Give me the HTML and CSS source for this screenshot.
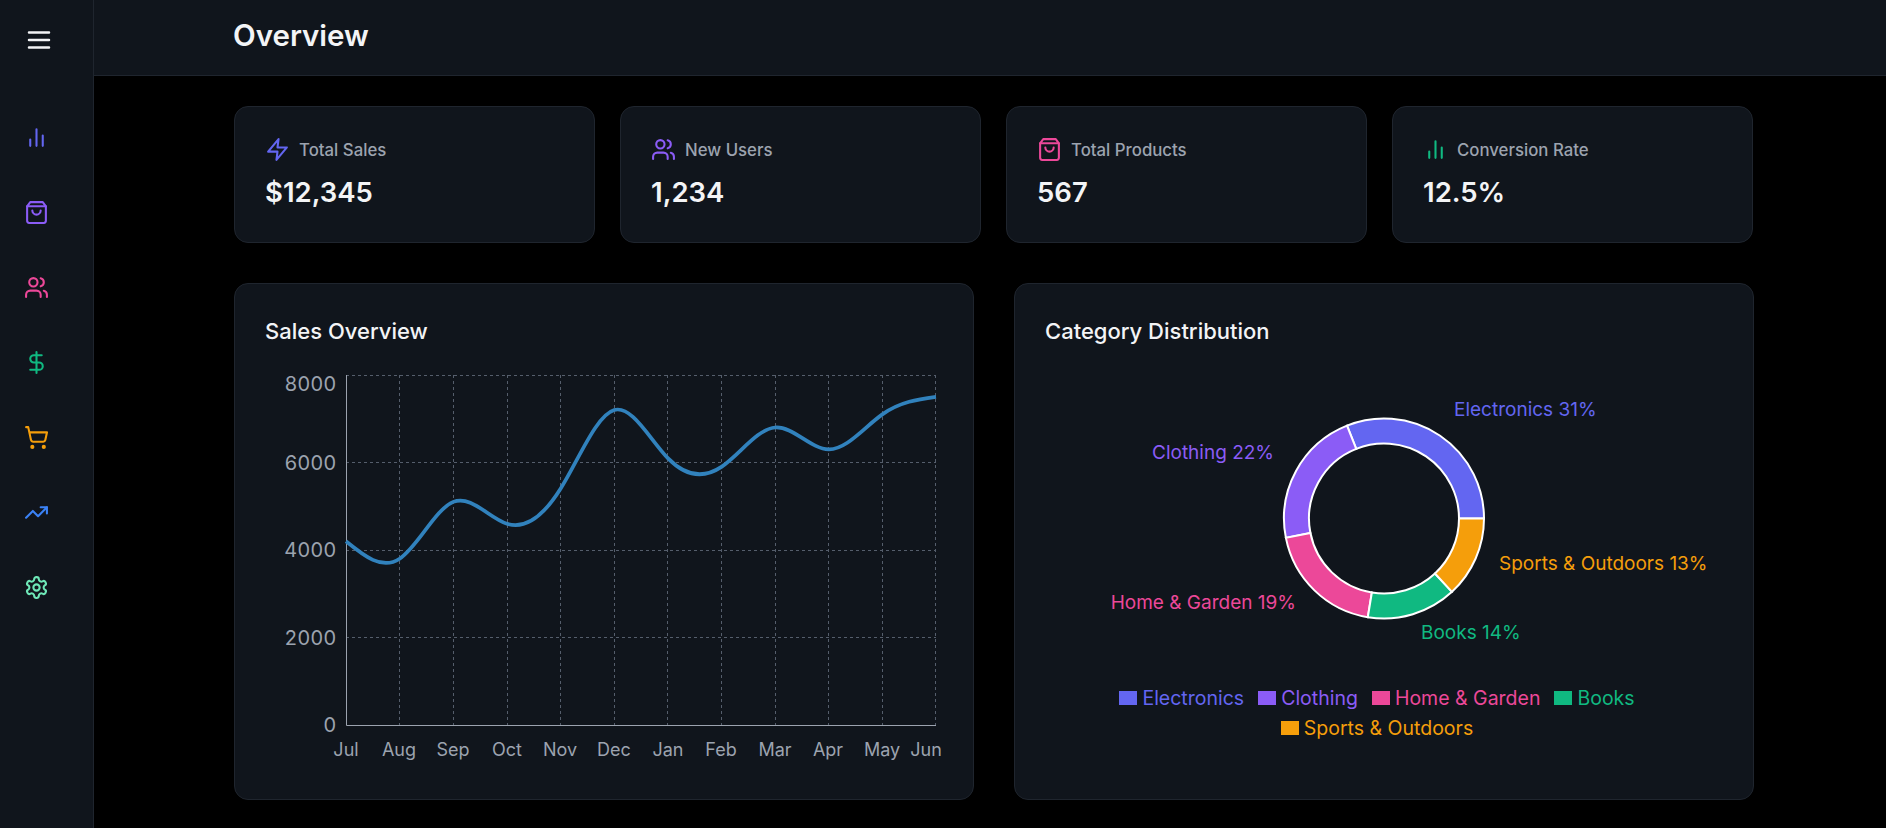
FILE: index.html
```html
<!DOCTYPE html>
<html lang="en">
<head>
    <meta charset="UTF-8">
    <meta name="viewport" content="width=device-width, initial-scale=1.0">
    <title>Overview</title>
    <link rel="stylesheet" href="styles.css">
</head>
<body>

    <aside class="sidebar">
        <button class="menu-btn">
            <svg class="icon icon-menu" viewBox="0 0 24 24"><path d="M4 6h16M4 12h16M4 18h16"/></svg>
        </button>
        <nav class="side-nav">
            <a href="#" class="c-indigo"><svg class="icon" viewBox="0 0 24 24"><path d="M18 20V10M12 20V4M6 20v-6"/></svg></a>
            <a href="#" class="c-violet"><svg class="icon" viewBox="0 0 24 24"><path d="M6 2 3 6v14a2 2 0 0 0 2 2h14a2 2 0 0 0 2-2V6l-3-4Z"/><path d="M3 6h18"/><path d="M16 10a4 4 0 0 1-8 0"/></svg></a>
            <a href="#" class="c-pink"><svg class="icon" viewBox="0 0 24 24"><path d="M16 21v-2a4 4 0 0 0-4-4H6a4 4 0 0 0-4 4v2"/><circle cx="9" cy="7" r="4"/><path d="M22 21v-2a4 4 0 0 0-3-3.87"/><path d="M16 3.13a4 4 0 0 1 0 7.75"/></svg></a>
            <a href="#" class="c-green"><svg class="icon" viewBox="0 0 24 24"><path d="M12 2v20"/><path d="M17 5H9.5a3.5 3.5 0 0 0 0 7h5a3.5 3.5 0 0 1 0 7H6"/></svg></a>
            <a href="#" class="c-amber"><svg class="icon" viewBox="0 0 24 24"><circle cx="8" cy="21" r="1"/><circle cx="19" cy="21" r="1"/><path d="M2.05 2.05h2l2.66 12.42a2 2 0 0 0 2 1.58h9.78a2 2 0 0 0 1.95-1.57l1.65-7.43H5.12"/></svg></a>
            <a href="#" class="c-blue"><svg class="icon" viewBox="0 0 24 24"><path d="M22 7l-8.500 8.500-5-5L2 17"/><path d="M16 7h6v6"/></svg></a>
            <a href="#" class="c-mint"><svg class="icon" viewBox="0 0 24 24"><path d="M12.220 2h-.44a2 2 0 0 0-2 2v.18a2 2 0 0 1-1 1.730l-.43.25a2 2 0 0 1-2 0l-.15-.08a2 2 0 0 0-2.730.73l-.22.38a2 2 0 0 0 .73 2.730l.15.1a2 2 0 0 1 1 1.720v.51a2 2 0 0 1-1 1.740l-.15.09a2 2 0 0 0-.73 2.730l.22.38a2 2 0 0 0 2.730.73l.15-.08a2 2 0 0 1 2 0l.43.25a2 2 0 0 1 1 1.730V20a2 2 0 0 0 2 2h.44a2 2 0 0 0 2-2v-.18a2 2 0 0 1 1-1.730l.43-.25a2 2 0 0 1 2 0l.15.08a2 2 0 0 0 2.730-.73l.22-.39a2 2 0 0 0-.73-2.730l-.15-.08a2 2 0 0 1-1-1.740v-.5a2 2 0 0 1 1-1.740l.15-.09a2 2 0 0 0 .73-2.730l-.22-.38a2 2 0 0 0-2.730-.73l-.15.08a2 2 0 0 1-2 0l-.43-.25a2 2 0 0 1-1-1.730V4a2 2 0 0 0-2-2z"/><circle cx="12" cy="12" r="3"/></svg></a>
        </nav>
    </aside>

    <div class="page">
        <header class="topbar">
            <h1>Overview</h1>
        </header>

        <main class="content">
            <section class="stats">
                <div class="card stat-card">
                    <div class="stat-label">
                        <svg class="icon c-indigo" viewBox="0 0 24 24"><path d="M13 2 3 14h9l-1 8 10-12h-9l1-8z"/></svg>
                        <span>Total Sales</span>
                    </div>
                    <p class="stat-value">$12,345</p>
                </div>
                <div class="card stat-card">
                    <div class="stat-label">
                        <svg class="icon c-violet" viewBox="0 0 24 24"><path d="M16 21v-2a4 4 0 0 0-4-4H6a4 4 0 0 0-4 4v2"/><circle cx="9" cy="7" r="4"/><path d="M22 21v-2a4 4 0 0 0-3-3.870"/><path d="M16 3.130a4 4 0 0 1 0 7.750"/></svg>
                        <span>New Users</span>
                    </div>
                    <p class="stat-value">1,234</p>
                </div>
                <div class="card stat-card">
                    <div class="stat-label">
                        <svg class="icon c-pink" viewBox="0 0 24 24"><path d="M6 2 3 6v14a2 2 0 0 0 2 2h14a2 2 0 0 0 2-2V6l-3-4Z"/><path d="M3 6h18"/><path d="M16 10a4 4 0 0 1-8 0"/></svg>
                        <span>Total Products</span>
                    </div>
                    <p class="stat-value">567</p>
                </div>
                <div class="card stat-card">
                    <div class="stat-label">
                        <svg class="icon c-green" viewBox="0 0 24 24"><path d="M18 20V10M12 20V4M6 20v-6"/></svg>
                        <span>Conversion Rate</span>
                    </div>
                    <p class="stat-value">12.5%</p>
                </div>
            </section>

            <section class="charts">
                <div class="card chart-card">
                    <h2>Sales Overview</h2>
                    <svg class="chart" width="678" height="410" viewBox="0 0 678 410">
                        <g class="grid">
                            <path d="M81 15.500h590M81 102.500h590M81 190.500h590M81 277.500h590"/>
                            <path d="M134.500 15v350M188.500 15v350M242.500 15v350M295.500 15v350M349.500 15v350M402.500 15v350M456.500 15v350M510.500 15v350M563.500 15v350M617.500 15v350M670.500 15v350"/>
                        </g>
                        <path class="axis" d="M81.500 15v350.500H671"/>
                        <g class="tick tick-y" text-anchor="end">
                            <text x="71.500" y="31">8000</text>
                            <text x="71.500" y="110">6000</text>
                            <text x="71.500" y="197">4000</text>
                            <text x="71.500" y="285">2000</text>
                            <text x="71.500" y="372">0</text>
                        </g>
                        <g class="tick" text-anchor="middle">
                            <text x="81" y="396">Jul</text>
                            <text x="134" y="396">Aug</text>
                            <text x="188" y="396">Sep</text>
                            <text x="242" y="396">Oct</text>
                            <text x="295" y="396">Nov</text>
                            <text x="349" y="396">Dec</text>
                            <text x="403" y="396">Jan</text>
                            <text x="456" y="396">Feb</text>
                            <text x="510" y="396">Mar</text>
                            <text x="563" y="396">Apr</text>
                            <text x="617" y="396">May</text>
                            <text x="661" y="396">Jun</text>
                        </g>
                        <path id="salesLine" class="sales-line"/>
                    </svg>
                </div>

                <div class="card chart-card">
                    <h2>Category Distribution</h2>
                    <svg class="chart chart-pie" width="678" height="300" viewBox="0 0 678 300">
                        <g id="pieSlices" class="pie-slices"></g>
                        <text class="pie-label f-indigo" x="409" y="56">Electronics 31%</text>
                        <text class="pie-label f-violet" x="229" y="99" text-anchor="end">Clothing 22%</text>
                        <text class="pie-label f-amber" x="454" y="210">Sports &amp; Outdoors 13%</text>
                        <text class="pie-label f-pink" x="251" y="249" text-anchor="end">Home &amp; Garden 19%</text>
                        <text class="pie-label f-green" x="376" y="279">Books 14%</text>
                    </svg>
                    <ul class="legend">
                        <li class="c-indigo"><span class="swatch"></span>Electronics</li>
                        <li class="c-violet"><span class="swatch"></span>Clothing</li>
                        <li class="c-pink"><span class="swatch"></span>Home &amp; Garden</li>
                        <li class="c-green"><span class="swatch"></span>Books</li>
                        <li class="c-amber"><span class="swatch"></span>Sports &amp; Outdoors</li>
                    </ul>
                </div>
            </section>
        </main>
    </div>

    <script src="script.js"></script>
</body>
</html>
```

FILE: styles.css
```css
* {
    box-sizing: border-box;
}

body {
    font-family: Inter, "Liberation Sans", sans-serif;
    background-color: #000;
    color: #f3f4f6;
    margin: 0;
    display: flex;
    height: 828px;
    overflow: hidden;
}

h1, h2, p, ul {
    margin: 0;
    padding: 0;
}

.icon {
    display: block;
    width: 25px;
    height: 25px;
    flex: none;
    fill: none;
    stroke: currentColor;
    stroke-width: 2;
    stroke-linecap: round;
    stroke-linejoin: round;
}

.icon-menu {
    width: 30px;
    height: 30px;
}

.c-indigo { color: #6366f1; }
.c-violet { color: #8b5cf6; }
.c-pink { color: #ec4899; }
.c-green { color: #10b981; }
.c-amber { color: #f59e0b; }
.c-blue { color: #3b82f6; }
.c-mint { color: #6ee7b7; }

.f-indigo { fill: #6366f1; }
.f-violet { fill: #8b5cf6; }
.f-pink { fill: #ec4899; }
.f-green { fill: #10b981; }
.f-amber { fill: #f59e0b; }

.sidebar {
    width: 94px;
    flex: none;
    background-color: #10151c;
    border-right: 1px solid #1f252e;
    padding: 25px 0 0 24px;
}

.menu-btn {
    display: block;
    background: none;
    border: none;
    padding: 0;
    color: #f3f4f6;
    margin-bottom: 70px;
}

.side-nav {
    display: flex;
    flex-direction: column;
    gap: 50px;
}

.side-nav a {
    display: block;
}

.page {
    flex: 1;
    min-width: 0;
}

.topbar {
    height: 76px;
    background-color: #10151c;
    border-bottom: 1px solid #1f252e;
    padding: 16px 0 0 139px;
}

.topbar h1 {
    font-size: 29.500px;
    line-height: 38px;
    font-weight: 600;
}

.content {
    width: 1520px;
    margin-left: 140px;
    padding-top: 30px;
}

.card {
    background-color: #10151c;
    border: 1px solid #1f252e;
    border-radius: 14px;
    padding: 30px;
}

.stats {
    display: grid;
    grid-template-columns: repeat(4, 361px);
    gap: 25px;
    margin-bottom: 40px;
}

.stat-card {
    height: 137px;
}

.stat-label {
    display: flex;
    align-items: center;
    gap: 9px;
    font-size: 16.800px;
    font-weight: 500;
    color: #9ca3af;
}

.stat-value {
    font-size: 27.500px;
    line-height: 40px;
    font-weight: 600;
    margin-top: 10px;
}

.charts {
    display: grid;
    grid-template-columns: 740px 740px;
    gap: 40px;
}

.chart-card {
    height: 517px;
}

.chart-card h2 {
    font-size: 22px;
    line-height: 34px;
    font-weight: 500;
    margin-bottom: 12px;
}

.chart {
    display: block;
}

.grid path {
    fill: none;
    stroke: #555e6c;
    stroke-dasharray: 3 3;
}

.axis {
    fill: none;
    stroke: #9ca3af;
}

.tick text {
    fill: #9ca3af;
    font-size: 18px;
}

.tick-y text {
    font-size: 20px;
    letter-spacing: 0.400px;
}

.sales-line {
    fill: none;
    stroke: #3182bd;
    stroke-width: 3.700;
}

.pie-slices path {
    stroke: #fff;
    stroke-width: 2;
}

.pie-label {
    font-size: 19px;
}

.legend {
    list-style: none;
    display: flex;
    flex-wrap: wrap;
    justify-content: center;
    margin-top: 23px;
    line-height: 30px;
    font-size: 19.500px;
}

.legend li {
    display: flex;
    align-items: center;
    gap: 5px;
    margin-right: 14px;
}

.swatch {
    width: 18px;
    height: 14px;
    background-color: currentColor;
}
```

FILE: script.js
```js
// sales line, natural spline through the monthly values
const sales = [4200, 3800, 5100, 4600, 5400, 7200, 6100, 5900, 6800, 6300, 7100, 7500];

const xs = sales.map((v, i) => 81 + i * 590 / 11);
const ys = sales.map(v => 365 - v * 350 / 8000);

function controlPoints(x) {
    const n = x.length - 1;
    const a = [0], b = [2], r = [x[0] + 2 * x[1]];
    for (let i = 1; i < n - 1; i++) {
        a[i] = 1;
        b[i] = 4;
        r[i] = 4 * x[i] + 2 * x[i + 1];
    }
    a[n - 1] = 2;
    b[n - 1] = 7;
    r[n - 1] = 8 * x[n - 1] + x[n];
    for (let i = 1; i < n; i++) {
        const m = a[i] / b[i - 1];
        b[i] -= m;
        r[i] -= m * r[i - 1];
    }
    a[n - 1] = r[n - 1] / b[n - 1];
    for (let i = n - 2; i >= 0; i--) {
        a[i] = (r[i] - a[i + 1]) / b[i];
    }
    b[n - 1] = (x[n] + a[n - 1]) / 2;
    for (let i = 0; i < n - 1; i++) {
        b[i] = 2 * x[i + 1] - a[i + 1];
    }
    return [a, b];
}

const [ax, bx] = controlPoints(xs);
const [ay, by] = controlPoints(ys);
let line = 'M' + xs[0] + ' ' + ys[0];
for (let i = 0; i < xs.length - 1; i++) {
    line += 'C' + ax[i] + ' ' + ay[i] + ' ' + bx[i] + ' ' + by[i] + ' ' + xs[i + 1] + ' ' + ys[i + 1];
}
document.getElementById('salesLine').setAttribute('d', line);

// category donut, starts at 3 o'clock and runs counter clockwise
const categories = [
    { value: 4500, color: '#6366f1' },
    { value: 3200, color: '#8b5cf6' },
    { value: 2800, color: '#ec4899' },
    { value: 2100, color: '#10b981' },
    { value: 1900, color: '#f59e0b' }
];

const cx = 339, cy = 158.500, outer = 100, inner = 75;
const total = categories.reduce((sum, c) => sum + c.value, 0);

function polar(radius, angle) {
    const rad = angle * Math.PI / 180;
    return (cx + radius * Math.cos(rad)) + ' ' + (cy - radius * Math.sin(rad));
}

let angle = 0;
let slices = '';
categories.forEach(c => {
    const end = angle + c.value / total * 360;
    const large = end - angle > 180 ? 1 : 0;
    slices += '<path fill="' + c.color + '" d="M' + polar(outer, angle) +
        'A' + outer + ' ' + outer + ' 0 ' + large + ' 0 ' + polar(outer, end) +
        'L' + polar(inner, end) +
        'A' + inner + ' ' + inner + ' 0 ' + large + ' 1 ' + polar(inner, angle) + 'Z"/>';
    angle = end;
});
document.getElementById('pieSlices').innerHTML = slices;
```
